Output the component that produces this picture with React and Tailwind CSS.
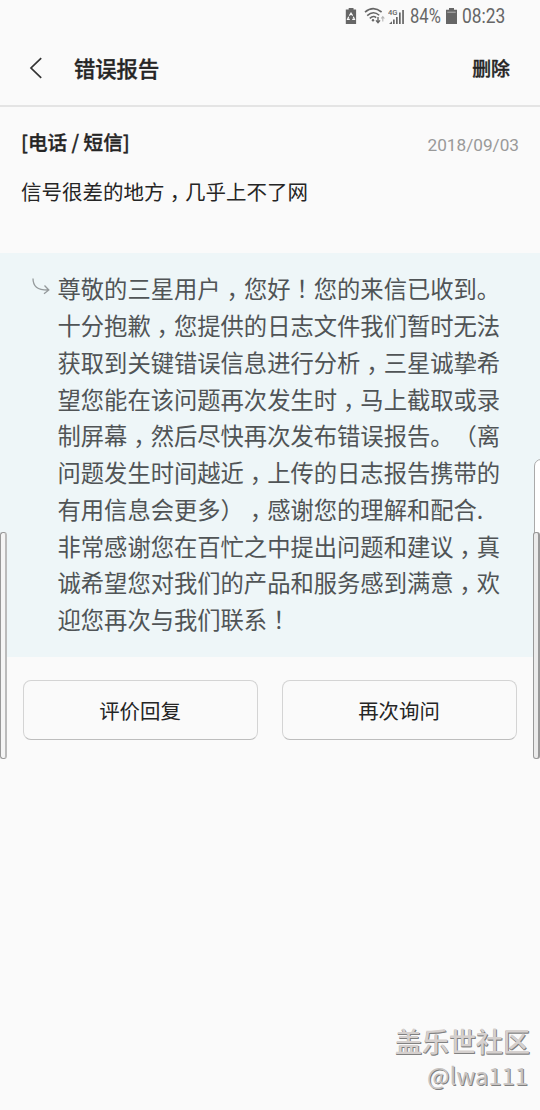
import React from 'react';

const replyLines = [
    '尊敬的三星用户，您好！您的来信已收到。',
    '十分抱歉，您提供的日志文件我们暂时无法',
    '获取到关键错误信息进行分析，三星诚挚希',
    '望您能在该问题再次发生时，马上截取或录',
    '制屏幕，然后尽快再次发布错误报告。（离',
    '问题发生时间越近，上传的日志报告携带的',
    '有用信息会更多），感谢您的理解和配合.',
    '非常感谢您在百忙之中提出问题和建议，真',
    '诚希望您对我们的产品和服务感到满意，欢',
    '迎您再次与我们联系！',
];

// Commas and exclamation marks sit in the middle of their cell
const Line = ({ text }) => (
    <>
        {text.split(/([，！])/).map((part, i) =>
            part === '，' || part === '！' ? (
                <span key={i} className="inline-block w-[1em] text-center [font-feature-settings:'halt']">{part}</span>
            ) : (
                <span key={i}>{part}</span>
            )
        )}
    </>
);

const StatusBar = () => (
    <div className="flex h-8 items-center pl-[345px] text-[#666]">
        <svg className="h-[17px] w-[12px] shrink-0" viewBox="0 0 12 17">
            <path d="M3.7 0h4.8v1.6h2.6V16H.8V1.6h2.9z" fill="#666" />
            <path d="M4.4 7.6 6 5.2 7.6 7.6M8.3 8.8l1.2 2.6H7.2M4.8 11.4H2.5L3.7 8.8" fill="none" stroke="#fafafa" strokeWidth="1.2" />
        </svg>
        <svg className="ml-[7px] h-[18px] w-[22px] shrink-0" viewBox="0 0 22 18" fill="none" stroke="#666">
            <path d="M1 5.2Q9 -1.8 17.6 5" strokeWidth="1.6" />
            <path d="M3.2 8.6Q9.2 3 15.2 8.2" strokeWidth="1.5" />
            <path d="M5.8 11.4Q9.2 8.2 12.2 10.6" strokeWidth="1.5" />
            <circle cx="9" cy="13.2" r="1.2" fill="#666" stroke="none" />
            <path d="M14 10v5.5M12 13.4l2 2.3 2-2.3" strokeWidth="1.4" />
            <path d="M18.8 14.5V9.8M17.2 11.5l1.6-1.8 1.6 1.8" stroke="#b5b5b5" strokeWidth="1.1" />
        </svg>
        <svg className="ml-[2px] h-[17px] w-[17px] shrink-0" viewBox="0 0 17 17" fill="#666">
            <text x="0" y="6.6" fontSize="8" fontWeight="500" fontFamily="Roboto, sans-serif" textLength="9.5" lengthAdjust="spacingAndGlyphs">4G</text>
            <path d="M1 16l3-2.8V16zM5 11.6h1.7V16H5zM8 9h1.7v7H8zM11 4.5h1.7V16H11zM14.2 2h1.7v14h-1.7z" />
        </svg>
        <span className="ml-[5px] w-[32px] origin-left scale-x-[0.85] whitespace-nowrap pt-[2px] font-[Roboto,sans-serif] text-[19.5px] leading-8">84%</span>
        <svg className="ml-[4px] h-[16px] w-[11px] shrink-0" viewBox="0 0 11 16">
            <path d="M3 0h5v1.8h3V16H0V1.8h3z" fill="#666" />
            <path d="M1.3 4.2h8.4" stroke="#b8b8b8" strokeWidth="1" />
        </svg>
        <span className="ml-[5px] w-[44px] origin-left scale-x-[0.89] whitespace-nowrap pt-[2px] font-[Roboto,sans-serif] text-[19.5px] leading-8">08:23</span>
    </div>
);

const App = () => {
    return (
        <div className="relative h-[1110px] w-[540px] overflow-hidden bg-[#fafafa] font-['Noto_Sans_CJK_SC',sans-serif] text-[#252525] [text-spacing-trim:space-all]">
            <StatusBar />

            {/* Title bar */}
            <header className="flex h-[75px] items-center border-b-2 border-[#e4e4e4] pr-[30px] pb-[2px] pl-[29px]">
                <svg className="h-[22px] w-[14px]" viewBox="0 0 14 22" fill="none" stroke="#333" strokeWidth="1.7">
                    <path d="M12.2 1.2 2 11l10.2 9.8" />
                </svg>
                <h1 className="ml-[31px] text-[21.3px] leading-8 font-medium [-webkit-text-stroke:0.35px]">错误报告</h1>
                <button className="ml-auto text-[18.9px] leading-8 font-medium [-webkit-text-stroke:0.35px]">删除</button>
            </header>

            {/* Question */}
            <section className="h-[146px] px-[21px] pt-[19px]">
                <div className="flex h-[34px] items-start justify-between">
                    <h2 className="text-[19.6px] leading-8 font-medium [-webkit-text-stroke:0.35px]">[电话 / 短信]</h2>
                    <span className="pt-[5px] font-[Roboto,sans-serif] text-[17.2px] leading-7 text-[#999]">2018/09/03</span>
                </div>
                <p className="mt-[15px] text-[20.5px] leading-8 whitespace-nowrap">
                    <Line text="信号很差的地方，几乎上不了网" />
                </p>
            </section>

            {/* Reply */}
            <section className="flex h-[404px] bg-[#eef6f8] pt-[17.4px] pl-[32px]">
                <svg className="mt-[7.6px] h-[18px] w-[18px] shrink-0" viewBox="0 0 18 18" fill="none" stroke="#959a9c" strokeWidth="1.3">
                    <path d="M1 0.5C1 8 5 12.2 16.5 12M12.5 7.5l4.3 4.5-4.8 3.8" />
                </svg>
                <div className="ml-[7.5px] text-[23.3px] leading-[36.75px] whitespace-nowrap text-[#505456]">
                    {replyLines.map((line) => (
                        <p key={line}><Line text={line} /></p>
                    ))}
                </div>
            </section>

            {/* Actions */}
            <div className="flex gap-6 px-[23px] pt-[23px]">
                <button className="h-[60px] flex-1 rounded-lg border border-[#d4d4d4] border-b-[#bdbdbd] pr-[1px] text-[20.4px]">评价回复</button>
                <button className="h-[60px] flex-1 rounded-lg border border-[#d4d4d4] border-b-[#bdbdbd] pr-[1px] text-[20.4px]">再次询问</button>
            </div>

            {/* Edge handles */}
            <div className="absolute top-[532px] left-0 h-[227px] w-[7px] rounded-[3px] border border-r-2 border-[#999] border-r-[#bbb] bg-[#f5f5f5]" />
            <div className="absolute top-[459px] left-[534px] h-[228px] w-[16px] rounded-[7px] border border-[#aaa] bg-white" />
            <div className="absolute top-[532px] left-[533px] h-[227px] w-[7px] rounded-[3px] border border-r-2 border-[#999] bg-[#ebebeb]" />

            {/* Watermark */}
            <div className="absolute right-[10px] bottom-[19px] text-right text-[#d5d0ce]">
                <p className="text-[27px] leading-[37px] font-medium [text-shadow:1px_1px_0_#808080,0_1px_0_#808080]">盖乐世社区</p>
                <p className="pr-[2px] text-[23.8px] leading-8 text-[#c8c4c2] [text-shadow:1px_1px_0_#808080]">@lwa111</p>
            </div>
        </div>
    );
};

export default App;
